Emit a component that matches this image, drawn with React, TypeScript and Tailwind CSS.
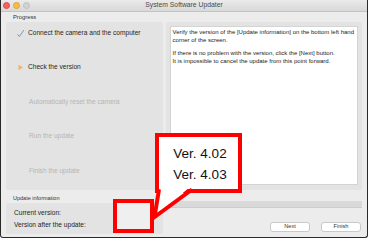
import React from 'react';

const font = { fontFamily: '"Liberation Sans", Arial, sans-serif' };

interface Step {
  label: string;
  state: 'done' | 'current' | 'pending';
}

const steps: Step[] = [
  { label: 'Connect the camera and the computer', state: 'done' },
  { label: 'Check the version', state: 'current' },
  { label: 'Automatically reset the camera', state: 'pending' },
  { label: 'Run the update', state: 'pending' },
  { label: 'Finish the update', state: 'pending' },
];

const StepMark = ({ state }: { state: Step['state'] }) => {
  if (state === 'done') {
    return (
      <svg width="9" height="9" viewBox="0 0 9 9" className="shrink-0">
        <path d="M1.5 5.2 L3.4 7.6 L7.8 1" fill="none" stroke="#7c9cbc" strokeWidth="1" />
      </svg>
    );
  }
  if (state === 'current') {
    return (
      <svg width="9" height="9" viewBox="0 0 9 9" className="shrink-0">
        <path d="M2.5 1.8 L7 4.5 L2.5 7.2 Z" fill="#f6b26b" />
      </svg>
    );
  }
  return <span className="w-[9px] shrink-0" />;
};

const App: React.FC = () => {
  return (
    <div className="relative w-[368px] h-[239px] bg-white overflow-hidden" style={font}>
      {/* window */}
      <div className="w-[368px] h-[238px] flex flex-col bg-[#ececec] border-l border-r border-b border-[#2a2a2a] rounded-b-[3px]">
        {/* title bar */}
        <div className="relative h-[12px] shrink-0 flex items-center justify-center bg-gradient-to-b from-[#ebebeb] to-[#d8d8d8] border-b border-[#c4c4c4]">
          <div className="absolute left-[2px] top-[1.5px] flex gap-[3px]">
            <span className="w-[7px] h-[7px] rounded-full bg-[#fc605c] border border-[#de4a46]" />
            <span className="w-[7px] h-[7px] rounded-full bg-[#fdbc40] border border-[#dea236]" />
            <span className="w-[7px] h-[7px] rounded-full bg-[#d3d3d3] border border-[#c0c0c0]" />
          </div>
          <span className="text-[6.8px] leading-none text-[#4a4a4a] -mt-[1px]">System Software Updater</span>
        </div>

        {/* body */}
        <div className="flex flex-col px-[5px]">
          <div className="h-[10px] pl-[7px] flex items-center text-[5.8px] text-[#333]">Progress</div>

          <div className="flex gap-[3px] h-[168px]">
            {/* steps */}
            <div className="w-[157px] bg-[#e3e3e3] rounded-[3px] flex flex-col pt-[6px] pl-[10px] gap-[24.5px]">
              {steps.map((s) => (
                <div key={s.label} className="h-[10px] flex items-center gap-[3px]">
                  <StepMark state={s.state} />
                  <span
                    className={`text-[6.6px] leading-none ${
                      s.state === 'pending' ? 'text-[#b5b5b5] pl-[1px]' : 'text-[#262626]'
                    }`}
                  >
                    {s.label}
                  </span>
                </div>
              ))}
            </div>

            {/* message */}
            <div className="w-[197px] bg-[#e3e3e3] rounded-[3px] pt-[4px] pb-[5px] px-[4px]">
              <div className="h-full bg-white border border-[#d4d4d4] px-[2px] pt-[1px] text-[6px] leading-[8px] text-[#222]">
                <p>Verify the version of the [Update information] on the bottom left hand</p>
                <p>corner of the screen.</p>
                <p className="mt-[5px]">If there is no problem with the version, click the [Next] button.</p>
                <p>It is impossible to cancel the update from this point forward.</p>
              </div>
            </div>
          </div>

          {/* bottom */}
          <div className="flex gap-[3px] mt-[3px]">
            <div className="w-[157px] flex flex-col">
              <div className="h-[10px] pl-[7px] flex items-center text-[5.5px] text-[#333]">Update information</div>
              <div className="h-[31px] bg-[#e3e3e3] rounded-[2px] flex flex-col justify-center gap-[5px] pl-[8px] text-[6.6px] leading-[7px] text-[#1e1e1e]">
                <span>Current version:</span>
                <span>Version after the update:</span>
              </div>
            </div>
            <div className="w-[197px] flex flex-col">
              <div className="h-[7px] mt-[8px] bg-[#d9d9d9] rounded-[1px] border-b border-[#cdcdcd]" />
              <div className="flex justify-end gap-[11px] mt-[14px] pr-[1px]">
                <button className="w-[40px] h-[10px] bg-white border border-[#c9c9c9] rounded-[3px] text-[5.6px] leading-none text-[#333]">
                  Next
                </button>
                <button className="w-[40px] h-[10px] bg-white border border-[#c9c9c9] rounded-[3px] text-[5.6px] leading-none text-[#333]">
                  Finish
                </button>
              </div>
            </div>
          </div>
        </div>
      </div>

      {/* annotation: highlighted version field */}
      <div className="absolute left-[113px] top-[199px] w-[41px] h-[34px] border-[4px] border-[#ff0000] bg-[#efefef]" />

      {/* annotation: callout */}
      <div className="absolute left-[155px] top-[133px] w-[87px] h-[60px] border-[4px] border-[#ff0000] bg-white flex flex-col items-center justify-center pl-[3px] pt-[2px]">
        <span className="text-[13.5px] leading-[21px] text-[#111]">Ver. 4.02</span>
        <span className="text-[13.5px] leading-[21px] text-[#111]">Ver. 4.03</span>
      </div>
      <svg className="absolute left-0 top-0" width="368" height="239" viewBox="0 0 368 239">
        <path d="M160 187 L190 187 L155 216 Z" fill="white" />
        <path d="M159 189.5 L154.5 217 L192 189.5" fill="none" stroke="#ff0000" strokeWidth="4" strokeLinejoin="miter" />
      </svg>
    </div>
  );
};

export default App;
